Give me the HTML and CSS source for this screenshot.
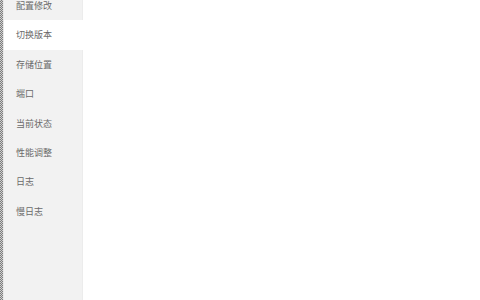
FILE: index.html
```html
<!DOCTYPE html>
<html lang="zh-CN">
<head>
    <meta charset="UTF-8">
    <title>设置</title>
    <link rel="stylesheet" href="styles.css">
</head>
<body>
    <div class="page">
        <div class="edge"></div>
        <!-- 左侧菜单 -->
        <ul class="menu">
            <li>配置修改</li>
            <li class="active">切换版本</li>
            <li>存储位置</li>
            <li>端口</li>
            <li>当前状态</li>
            <li>性能调整</li>
            <li>日志</li>
            <li>慢日志</li>
        </ul>
        <div class="content"></div>
    </div>
</body>
</html>
```

FILE: styles.css
```css
html, body {
    margin: 0;
    padding: 0;
    height: 100%;
    background: #fff;
    overflow: hidden;
}

.page {
    display: flex;
    height: 300px;
}

.edge {
    width: 3px;
    flex-shrink: 0;
    background: repeating-conic-gradient(#7d7d7d 0 25%, #cfcfcf 0 50%) 0 0 / 2px 2px;
    border-right: 1px solid #e8e8e8;
}

.menu {
    list-style: none;
    width: 78px;
    flex-shrink: 0;
    margin: 0;
    padding: 0;
    background: #f2f2f2;
    border-right: 1px solid #ececec;
    font-family: "Noto Sans CJK SC", "Noto Sans", sans-serif;
    font-size: 9px;
    color: #6a6a6a;
}

.menu li {
    height: 29.4px;
    line-height: 29.4px;
    padding-left: 12px;
}

.menu li:first-child {
    margin-top: -9px;
}

.menu li.active {
    background: #fff;
    margin-right: -1px;
}

.content {
    flex: 1;
}
```
